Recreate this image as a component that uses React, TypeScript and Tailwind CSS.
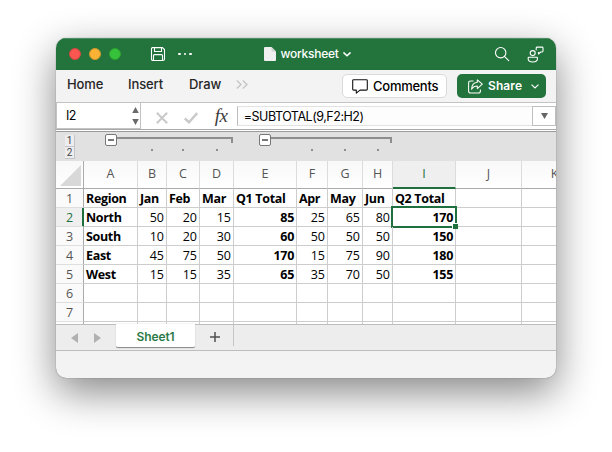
import React from "react";

const UI = "font-['Inter','Liberation_Sans',sans-serif]";
const CELL = "font-['Open_Sans','Noto_Sans',sans-serif]";

const columns = [
  { name: "A", w: "w-[54px]" },
  { name: "B", w: "w-[29px]" },
  { name: "C", w: "w-[33px]" },
  { name: "D", w: "w-[34px]" },
  { name: "E", w: "w-[63px]" },
  { name: "F", w: "w-[31px]" },
  { name: "G", w: "w-[35px]" },
  { name: "H", w: "w-[30px]" },
  { name: "I", w: "w-[63px]" },
  { name: "J", w: "w-[66px]" },
  { name: "K", w: "w-[66px]" },
];

const rows = [
  ["Region", "Jan", "Feb", "Mar", "Q1 Total", "Apr", "May", "Jun", "Q2 Total"],
  ["North", "50", "20", "15", "85", "25", "65", "80", "170"],
  ["South", "10", "20", "30", "60", "50", "50", "50", "150"],
  ["East", "45", "75", "50", "170", "15", "75", "90", "180"],
  ["West", "15", "15", "35", "65", "35", "70", "50", "155"],
  [],
  [],
];

function TitleBar() {
  return (
    <div className="flex h-8 shrink-0 items-center bg-[#22733c] shadow-[inset_0_1px_0_#4f8d62]">
      <div className="ml-[13px] flex gap-2">
        <span className="h-3 w-3 rounded-full border border-[#cf4741] bg-[#fb5650]" />
        <span className="h-3 w-3 rounded-full border border-[#cf952e] bg-[#fcb335]" />
        <span className="h-3 w-3 rounded-full border border-[#2da22f] bg-[#37c23c]" />
      </div>
      <svg className="ml-[29px] h-4 w-4" viewBox="0 0 16 16" fill="none" stroke="#fff" strokeWidth="1.1">
        <path d="M2.5 1.6h9.9l2.1 2v9.3q0 1.6-1.6 1.6H3.1q-1.6 0-1.6-1.6V2.6q0-1 1-1z" />
        <path d="M4.5 1.8v3.7h7V1.8M3.5 14.4V9.6q0-1 1-1h7q1 0 1 1v4.8" />
      </svg>
      <div className="ml-[12px] flex gap-[3px]">
        <span className="h-[2.5px] w-[2.5px] rounded-full bg-white" />
        <span className="h-[2.5px] w-[2.5px] rounded-full bg-white" />
        <span className="h-[2.5px] w-[2.5px] rounded-full bg-white" />
      </div>
      <svg className="ml-[72px] h-[14px] w-3" viewBox="0 0 12 14">
        <path d="M1 0h6.5L12 4.5V13q0 1-1 1H1q-1 0-1-1V1q0-1 1-1z" fill="#f0f0f0" />
        <path d="M7.5 0v3.5q0 1 1 1H12z" fill="#cfd3d0" />
      </svg>
      <span className={`${UI} ml-[5px] w-[59px] whitespace-nowrap text-[12px] font-medium tracking-[-0.25px] text-white`}>
        worksheet
      </span>
      <svg className="ml-[3px] h-[5px] w-2" viewBox="0 0 8 5" fill="none" stroke="#fff" strokeWidth="1.5" strokeLinecap="round">
        <path d="M.9.9 4 3.8 7.1.9" />
      </svg>
      <svg className="ml-auto h-4 w-4" viewBox="0 0 16 16" fill="none" stroke="#fff" strokeWidth="1.1" strokeLinecap="round">
        <circle cx="6.7" cy="6.7" r="5.2" />
        <path d="m10.4 10.4 4.3 4.3" />
      </svg>
      <svg className="ml-[17px] mr-[12px] h-[17px] w-[17px]" viewBox="0 0 17 17" fill="none" stroke="#fff" strokeWidth="1.1" strokeLinejoin="round">
        <circle cx="5.7" cy="7.1" r="2.5" />
        <path d="M2 11.3h7.6q.9 0 .9.9 0 3.8-4.7 3.8T1.1 12.2q0-.9.9-.9z" />
        <path d="M9.2 4.2V2q0-.9.9-.9h5q.9 0 .9.9v3.1q0 .9-.9.9h-1.4l-2.2 2V6" />
      </svg>
    </div>
  );
}

function Ribbon() {
  return (
    <div className={`${UI} flex h-[33px] shrink-0 border-b border-[#c3c3c3] bg-[#f3f3f3] text-[#262626]`}>
      <div className="flex h-[29px] items-center text-[13px] font-medium tracking-[-0.1px]">
        <span className="ml-[11px] w-[61px]">Home</span>
        <span className="w-[61px]">Insert</span>
        <span className="w-[47px]">Draw</span>
        <svg className="h-[9px] w-3" viewBox="0 0 12 9" fill="none" stroke="#c6c6c6" strokeWidth="1.4">
          <path d="M.8.6 5 4.5.8 8.4M6.8.6 11 4.5 6.8 8.4" />
        </svg>
      </div>
      <div className="ml-auto mt-1 flex h-6 w-[105px] items-center rounded-[5px] border border-[#dadada] bg-white pl-[9px] text-[13px] font-medium tracking-[-0.25px] text-black">
        <svg className="h-[15px] w-4 shrink-0" viewBox="0 0 16 15" fill="none" stroke="#111" strokeWidth="1.1" strokeLinejoin="round">
          <path d="M1.6.7h12.8q.9 0 .9.9v8.6q0 .9-.9.9H8L4.3 14.2v-3.1H1.6q-.9 0-.9-.9V1.6q0-.9.9-.9z" />
        </svg>
        <span className="ml-[5px] pt-[1px]">Comments</span>
      </div>
      <div className="ml-[10px] mr-[10px] mt-1 flex h-6 w-[89px] items-center rounded-[5px] bg-[#22733c] pl-[11px] text-[12px] font-semibold tracking-[0.1px] text-white">
        <svg className="h-[15px] w-[15px] shrink-0" viewBox="0 0 15 15" fill="none" stroke="#fff" strokeWidth="1.05" strokeLinejoin="round">
          <path d="M5.5 2H2.7Q.6 2 .6 4v7.9q0 2.1 2.1 2.1h7.6q2.1 0 2.1-2.1V10.5" />
          <path d="M9.3.8l5 4.4-5 4.4V7q-3.8 0-5.7 3.2.3-6.5 5.7-6.9z" />
        </svg>
        <span className="ml-[5px] w-[43px]">Share</span>
        <svg className="h-[5px] w-2" viewBox="0 0 8 5" fill="none" stroke="#fff" strokeWidth="1.2">
          <path d="M.5.6 4 4 7.5.6" />
        </svg>
      </div>
    </div>
  );
}

function FormulaBar() {
  return (
    <div className={`${UI} flex h-[26px] shrink-0 bg-white text-black`}>
      <div className="flex h-[26px] w-[85px] items-center border-b border-l border-r border-[#c3c3c3] pl-[9px] pr-[1px] text-[12.5px]">
        <span className="pt-[2px] tracking-[-0.5px]">I2</span>
        <svg className="ml-auto h-[18px] w-[7px]" viewBox="0 0 7 18" fill="#6a6a6a">
          <path d="M3.5 0 6.8 6H.2zM3.5 18 6.8 12H.2z" />
        </svg>
      </div>
      <svg className="ml-[15px] mt-[9px] h-3 w-3" viewBox="0 0 12 12" fill="none" stroke="#c9c9c9" strokeWidth="2">
        <path d="m.8.8 10.4 10.4M11.2.8.8 11.2" />
      </svg>
      <svg className="ml-4 mt-[9px] h-3 w-[14px]" viewBox="0 0 14 12" fill="none" stroke="#c9c9c9" strokeWidth="2.4">
        <path d="m.8 6.5 4.2 3.7L13.2 1" />
      </svg>
      <span className="ml-[17px] mt-[1px] w-[22px] font-['Liberation_Serif',serif] text-[19px] italic leading-6 tracking-[-0.5px] text-[#3c3c3c]">
        fx
      </span>
      <div className="mt-[3px] flex h-5 w-[296px] items-center border-y border-l border-[#e2e2e2] border-l-[#bdbdbd] bg-[#fdfdfd] pl-[6px] pt-[2px] text-[12.5px] tracking-[-0.47px]">
        =SUBTOTAL(9,F2:H2)
      </div>
      <div className="mt-[3px] flex h-5 w-6 items-center justify-center border border-[#bfbfbf] bg-white">
        <svg className="h-[6px] w-[7px]" viewBox="0 0 7 6" fill="#666">
          <path d="M0 0h7L3.5 6z" />
        </svg>
      </div>
    </div>
  );
}

function Collapse() {
  return (
    <span className="flex h-3 w-3 items-center justify-center rounded-[2px] border border-[#777] bg-white">
      <span className="h-[1.5px] w-[6px] bg-[#777]" />
    </span>
  );
}

function Outline() {
  return (
    <div className="h-8 shrink-0 overflow-hidden border-t border-[#a9a9a9] bg-white pt-[1px]">
      <div className="flex h-[30px] border-t border-[#9a9a9a] bg-[#e1e1e1]">
        <div className="flex w-[27px] shrink-0 flex-col items-end pt-[3px] font-['Roboto',sans-serif] text-[10px] leading-[11px] text-[#444]">
          <span className="mr-[8px] h-[12px] w-[10px] border-b border-r border-[#c3c3c9] bg-[#ededf0] text-center">1</span>
          <span className="mr-[8px] h-[12px] w-[10px] border-b border-r border-[#c3c3c9] bg-[#ededf0] text-center">2</span>
        </div>
        <div className="shrink-0">
          <div className="ml-[22px] flex h-[14px] pt-[2px]">
            <Collapse />
            <span className="mt-[3px] h-[6px] w-[116px] border-r-2 border-t-2 border-[#8e8e8e]" />
            <span className="w-[26px]" />
            <Collapse />
            <span className="mt-[3px] h-[6px] w-[121px] border-r-2 border-t-2 border-[#8e8e8e]" />
          </div>
          <div className="flex pl-[0.5px] pt-[3px]">
            {columns.map((c) => (
              <span key={c.name} className={`${c.w} flex h-[2px] shrink-0 justify-center`}>
                {"BCDFGH".includes(c.name) && <span className="h-[2px] w-[2px] bg-[#8e8e8e]" />}
              </span>
            ))}
          </div>
        </div>
      </div>
    </div>
  );
}

function Grid() {
  return (
    <div className={`${CELL} h-[163px] shrink-0 overflow-hidden bg-white text-[12.5px]`}>
      <div className="flex h-7 bg-gradient-to-b from-[#f8f8f8] to-white text-[#555]">
        <div className="flex w-7 shrink-0 items-end justify-end border-b border-r border-[#ababab] pb-[2px] pr-[2px]">
          <svg className="h-[21px] w-[21px]" viewBox="0 0 21 21" fill="#d8d8d8">
            <path d="M21 0v21H0z" />
          </svg>
        </div>
        {columns.map((c) => (
          <div
            key={c.name}
            className={`${c.w} flex shrink-0 items-center justify-center border-r border-r-[#dcdcdc] ${
              c.name === "I"
                ? "border-b-2 border-b-[#1f6f3f] bg-[#efefef] pt-[1px] text-[#1f6f3f]"
                : "border-b border-b-[#ababab]"
            }`}
          >
            {c.name}
          </div>
        ))}
      </div>
      {rows.map((row, r) => (
        <div key={r} className="flex h-[19px] leading-[19px]">
          <div
            className={`w-7 shrink-0 border-b border-r border-b-[#dedede] text-center ${
              r === 1
                ? "border-r-[#1f6f3f] bg-[#efefef] text-[#1f6f3f] shadow-[inset_-1px_0_0_#1f6f3f]"
                : "border-r-[#ababab] bg-[#fafafa] text-[#555]"
            }`}
          >
            {r + 1}
          </div>
          {columns.map((c, i) => (
            <div
              key={c.name}
              className={`${c.w} relative shrink-0 whitespace-nowrap border-b border-r border-[#cdcdcd] text-black ${
                r === 0 || i === 0 ? "pl-[2px] text-left" : "pr-[2px] text-right"
              } ${r === 0 || i === 0 || i === 4 || i === 8 ? "font-bold tracking-[-0.33px]" : ""}`}
            >
              {row[i]}
              {r === 1 && i === 8 && (
                <>
                  <span className="absolute -left-[2px] -top-[2px] h-[22px] w-[66px] border-2 border-[#1f6f3f]" />
                  <span className="absolute -bottom-[3px] -right-[3px] z-10 h-[6px] w-[6px] border-l border-t border-white bg-[#1f6f3f]" />
                </>
              )}
            </div>
          ))}
        </div>
      ))}
      <div className="flex h-[2px]">
        <div className="w-7 shrink-0 border-r border-[#ababab]" />
        {columns.map((c) => (
          <div key={c.name} className={`${c.w} shrink-0 border-r border-[#cdcdcd]`} />
        ))}
      </div>
    </div>
  );
}

function SheetTabs() {
  return (
    <div className={`${UI} flex h-[27px] shrink-0 border-b border-t border-[#bdbdbd] bg-[#ededed]`}>
      <svg className="ml-[15px] mt-2 h-[10px] w-[30px]" viewBox="0 0 30 10" fill="#b1b1b1">
        <path d="M7 0v10L0 5zM23 0v10l7-5z" />
      </svg>
      <div className="-mt-[1px] ml-[15px] flex h-[24px] w-[79px] items-center justify-center rounded-b-[2px] border-b border-[#8e8e8e] bg-white pt-[3px] text-[12px] font-semibold tracking-[-0.1px] text-[#2b7a46] shadow-[0_0_1px_#999]">
        Sheet1
      </div>
      <div className="flex h-[21px] w-[39px] items-center justify-center border-r border-[#c6c6c6] pl-[1px] pt-[3px]">
        <svg className="h-[10px] w-[10px]" viewBox="0 0 10 10" stroke="#505050" strokeWidth="1.5">
          <path d="M5 0v10M0 5h10" />
        </svg>
      </div>
    </div>
  );
}

export default function App() {
  return (
    <div className="h-[452px] w-[612px] overflow-hidden bg-white pl-[56px] pt-[38px]">
      <div className="flex h-[340px] w-[500px] flex-col overflow-hidden rounded-[10px] bg-[#f3f3f3] shadow-[0_0_1px_rgba(0,0,0,0.6),0_14px_40px_rgba(0,0,0,0.48)]">
        <TitleBar />
        <Ribbon />
        <FormulaBar />
        <Outline />
        <Grid />
        <SheetTabs />
      </div>
    </div>
  );
}
